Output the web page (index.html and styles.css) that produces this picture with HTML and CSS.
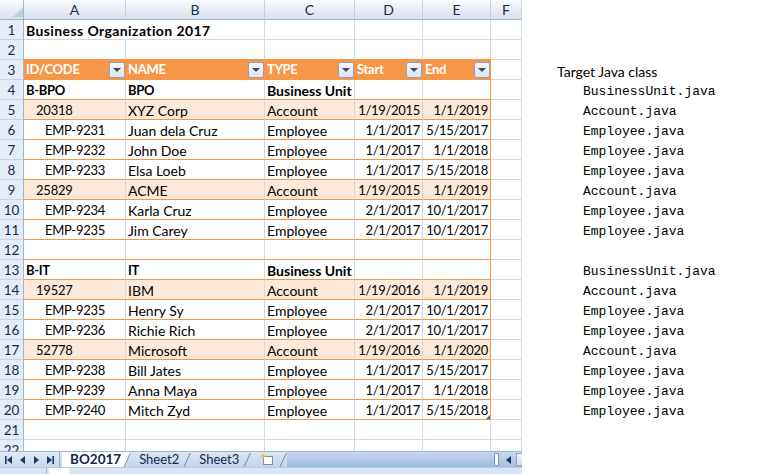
FILE: index.html
```html
<!DOCTYPE html>
<html>
<head>
<meta charset="utf-8">
<link rel="stylesheet" href="styles.css">
</head>
<body>
<div class="page">
  <div class="sheet">
    <div class="grid">
      <div class="r hdr"><div class="c corner"><svg class="tri" width="10" height="10" viewBox="0 0 10 10"><path d="M10 0 L10 10 L0 10 Z" fill="#c1cede"/></svg></div><div class="c ch">A</div><div class="c ch">B</div><div class="c ch">C</div><div class="c ch">D</div><div class="c ch">E</div><div class="c ch">F</div></div>
      <div class="r"><div class="c rh">1</div><div class="c b nob title">Business Organization 2017</div><div class="c"></div><div class="c"></div><div class="c"></div><div class="c"></div><div class="c"></div></div>
      <div class="r"><div class="c rh">2</div><div class="c o"></div><div class="c o"></div><div class="c o"></div><div class="c o"></div><div class="c o"></div><div class="c"></div></div>
      <div class="r"><div class="c rh">3</div><div class="c th o">ID/CODE<span class="fb"></span></div><div class="c th o">NAME<span class="fb"></span></div><div class="c th o">TYPE<span class="fb"></span></div><div class="c th o">Start<span class="fb"></span></div><div class="c th o e">End<span class="fb"></span></div><div class="c"></div></div>
      <div class="r"><div class="c rh">4</div><div class="c o b caps">B-BPO</div><div class="c o b caps">BPO</div><div class="c o b">Business Unit</div><div class="c o"></div><div class="c o e"></div><div class="c"></div></div>
      <div class="r"><div class="c rh">5</div><div class="c o pk i1">20318</div><div class="c o pk">XYZ Corp</div><div class="c o pk">Account</div><div class="c o pk n">1/19/2015</div><div class="c o pk n e">1/1/2019</div><div class="c"></div></div>
      <div class="r"><div class="c rh">6</div><div class="c o i2">EMP-9231</div><div class="c o">Juan dela Cruz</div><div class="c o">Employee</div><div class="c o n">1/1/2017</div><div class="c o n e">5/15/2017</div><div class="c"></div></div>
      <div class="r"><div class="c rh">7</div><div class="c o i2">EMP-9232</div><div class="c o">John Doe</div><div class="c o">Employee</div><div class="c o n">1/1/2017</div><div class="c o n e">1/1/2018</div><div class="c"></div></div>
      <div class="r"><div class="c rh">8</div><div class="c o i2">EMP-9233</div><div class="c o">Elsa Loeb</div><div class="c o">Employee</div><div class="c o n">1/1/2017</div><div class="c o n e">5/15/2018</div><div class="c"></div></div>
      <div class="r"><div class="c rh">9</div><div class="c o pk i1">25829</div><div class="c o pk">ACME</div><div class="c o pk">Account</div><div class="c o pk n">1/19/2015</div><div class="c o pk n e">1/1/2019</div><div class="c"></div></div>
      <div class="r"><div class="c rh">10</div><div class="c o i2">EMP-9234</div><div class="c o">Karla Cruz</div><div class="c o">Employee</div><div class="c o n">2/1/2017</div><div class="c o n e">10/1/2017</div><div class="c"></div></div>
      <div class="r"><div class="c rh">11</div><div class="c o i2">EMP-9235</div><div class="c o">Jim Carey</div><div class="c o">Employee</div><div class="c o n">2/1/2017</div><div class="c o n e">10/1/2017</div><div class="c"></div></div>
      <div class="r"><div class="c rh">12</div><div class="c o"></div><div class="c o"></div><div class="c o"></div><div class="c o"></div><div class="c o e"></div><div class="c"></div></div>
      <div class="r"><div class="c rh">13</div><div class="c o b caps">B-IT</div><div class="c o b caps">IT</div><div class="c o b">Business Unit</div><div class="c o"></div><div class="c o e"></div><div class="c"></div></div>
      <div class="r"><div class="c rh">14</div><div class="c o pk i1">19527</div><div class="c o pk">IBM</div><div class="c o pk">Account</div><div class="c o pk n">1/19/2016</div><div class="c o pk n e">1/1/2019</div><div class="c"></div></div>
      <div class="r"><div class="c rh">15</div><div class="c o i2">EMP-9235</div><div class="c o">Henry Sy</div><div class="c o">Employee</div><div class="c o n">2/1/2017</div><div class="c o n e">10/1/2017</div><div class="c"></div></div>
      <div class="r"><div class="c rh">16</div><div class="c o i2">EMP-9236</div><div class="c o">Richie Rich</div><div class="c o">Employee</div><div class="c o n">2/1/2017</div><div class="c o n e">10/1/2017</div><div class="c"></div></div>
      <div class="r"><div class="c rh">17</div><div class="c o pk i1">52778</div><div class="c o pk">Microsoft</div><div class="c o pk">Account</div><div class="c o pk n">1/19/2016</div><div class="c o pk n e">1/1/2020</div><div class="c"></div></div>
      <div class="r"><div class="c rh">18</div><div class="c o i2">EMP-9238</div><div class="c o">Bill Jates</div><div class="c o">Employee</div><div class="c o n">1/1/2017</div><div class="c o n e">5/15/2017</div><div class="c"></div></div>
      <div class="r"><div class="c rh">19</div><div class="c o i2">EMP-9239</div><div class="c o">Anna Maya</div><div class="c o">Employee</div><div class="c o n">1/1/2017</div><div class="c o n e">1/1/2018</div><div class="c"></div></div>
      <div class="r"><div class="c rh">20</div><div class="c o i2">EMP-9240</div><div class="c o">Mitch Zyd</div><div class="c o">Employee</div><div class="c o n">1/1/2017</div><div class="c o n e">5/15/2018<span class="grip"></span></div><div class="c"></div></div>
      <div class="r"><div class="c rh">21</div><div class="c"></div><div class="c"></div><div class="c"></div><div class="c"></div><div class="c"></div><div class="c"></div></div>
      <div class="r"><div class="c rh">22</div><div class="c"></div><div class="c"></div><div class="c"></div><div class="c"></div><div class="c"></div><div class="c"></div></div>
    </div>
    <div class="tabbar">
      <div class="nav">
        <svg width="8" height="8" viewBox="0 0 8 8"><rect x="0" y="0" width="1.6" height="8" fill="#1d3a66"/><path d="M7 0 L7 8 L2 4 Z" fill="#1d3a66"/></svg>
        <svg width="6" height="8" viewBox="0 0 6 8"><path d="M5 0 L5 8 L0 4 Z" fill="#1d3a66"/></svg>
        <svg width="6" height="8" viewBox="0 0 6 8"><path d="M1 0 L1 8 L6 4 Z" fill="#1d3a66"/></svg>
        <svg width="8" height="8" viewBox="0 0 8 8"><path d="M1 0 L1 8 L6 4 Z" fill="#1d3a66"/><rect x="6.4" y="0" width="1.6" height="8" fill="#1d3a66"/></svg>
      </div>
      <div class="tabs">
        <div class="tab active">BO2017</div>
        <svg class="slant" width="8" height="16" viewBox="0 0 8 16"><path d="M0 0 L0 16 L1 16 L8 1 L8 0 Z" fill="#fff"/><path d="M0.5 16 L7.5 1" stroke="#6d8db8" stroke-width="1"/></svg>
        <div class="tab">Sheet2</div>
        <svg class="slant" width="8" height="16" viewBox="0 0 8 16"><path d="M0.5 16 L7.5 1" stroke="#6d8db8" stroke-width="1"/></svg>
        <div class="tab">Sheet3</div>
        <svg class="slant" width="8" height="16" viewBox="0 0 8 16"><path d="M0.5 16 L7.5 1" stroke="#6d8db8" stroke-width="1"/></svg>
        <div class="tab newtab"><svg width="16" height="13" viewBox="0 0 16 13"><rect x="4.5" y="3.5" width="9" height="8" fill="#fff" stroke="#7f8ea3"/><path d="M4 0 L5 2.5 L7.5 3 L5 4 L4 6.5 L3 4 L0.5 3 L3 2.5 Z" fill="#f2b13c"/></svg></div>
        <svg class="slant" width="8" height="16" viewBox="0 0 8 16"><path d="M0.5 16 L7.5 1" stroke="#6d8db8" stroke-width="1"/></svg>
      </div>
      <div class="hscroll">
        <div class="split"></div>
        <div class="sbtn"><svg width="5" height="8" viewBox="0 0 5 8"><path d="M5 0 L5 8 L0 4 Z" fill="#1d3a66"/></svg></div>
        <div class="sthumb"></div>
      </div>
    </div>
    <div class="status"><span class="sdiv"></span><span class="sicon"></span></div>
  </div>
  <div class="side">
    <div class="spacer"></div>
    <div class="ln label">Target Java class</div>
    <div class="ln java">BusinessUnit.java</div>
    <div class="ln java">Account.java</div>
    <div class="ln java">Employee.java</div>
    <div class="ln java">Employee.java</div>
    <div class="ln java">Employee.java</div>
    <div class="ln java">Account.java</div>
    <div class="ln java">Employee.java</div>
    <div class="ln java">Employee.java</div>
    <div class="ln java"></div>
    <div class="ln java">BusinessUnit.java</div>
    <div class="ln java">Account.java</div>
    <div class="ln java">Employee.java</div>
    <div class="ln java">Employee.java</div>
    <div class="ln java">Account.java</div>
    <div class="ln java">Employee.java</div>
    <div class="ln java">Employee.java</div>
    <div class="ln java">Employee.java</div>
  </div>
</div>
</body>
</html>
```
FILE: styles.css
```css
html, body {
  margin: 0;
  padding: 0;
  background: #fff;
}
body {
  width: 764px;
  height: 474px;
  overflow: hidden;
  font-family: Lato, "Open Sans", sans-serif;
  font-size: 14px;
  color: #000;
}
.page {
  display: flex;
  height: 474px;
}
.sheet {
  width: 522px;
  display: flex;
  flex-direction: column;
  flex: none;
}
.grid {
  height: 452px;
  overflow: hidden;
}
.r {
  display: grid;
  grid-template-columns: 24px 102px 139px 90px 68px 68px 31px;
  height: 20px;
}
.c {
  box-sizing: border-box;
  height: 20px;
  border-right: 1px solid #d0d7e5;
  border-bottom: 1px solid #d0d7e5;
  padding: 2px 2px 0 2px;
  line-height: 17px;
  white-space: nowrap;
  overflow: visible;
  position: relative;
}
.nob {
  border-right-color: transparent;
}
.hdr .c {
  background: linear-gradient(#f9fbfd, #e5ebf3 60%, #d9e1ec);
  border-right: 1px solid #c5d2e3;
  border-bottom: 1px solid #9eb6ce;
  text-align: center;
  color: #1b2c45;
  padding: 1px 0 0 0;
}
.hdr .corner {
  display: flex;
  align-items: flex-end;
  justify-content: flex-end;
  padding: 0 2px 2px 0;
  border-right-color: #9eb6ce;
}
.tri { display: block; }
.rh {
  background: #e4ecf7;
  border-right: 1px solid #9eb6ce;
  border-bottom: 1px solid #c5d3e5;
  text-align: center;
  color: #1b2c45;
  font-size: 13.5px;
}
.hdr .c, .rh { padding-left: 0; padding-right: 0; }
.b { font-weight: bold; }
.title { letter-spacing: 0.4px; }
.caps { font-size: 13px; letter-spacing: -0.3px; }
.o { border-bottom-color: #f79646; }
.e { border-right-color: #f79646; }
.pk { background: #fde9d9; }
.n {
  text-align: right;
  padding-right: 2px;
  padding-left: 0;
  font-size: 13px;
  letter-spacing: -0.3px;
}
.i1 { padding-left: 12px; font-size: 13px; letter-spacing: -0.2px; }
.i2 { padding-left: 21px; font-size: 13px; letter-spacing: -0.25px; }
.th {
  background: #f79646;
  color: #fff;
  font-weight: bold;
  font-size: 13px;
  letter-spacing: -0.3px;
  border-right-color: #f79646;
  display: flex;
  align-items: center;
  padding: 0 0 0 2px;
}
.fb {
  margin-left: auto;
  margin-right: 0;
  width: 16px;
  height: 16px;
  box-sizing: border-box;
  border: 1px solid #8ea3bf;
  border-radius: 2px;
  background: linear-gradient(#f4f6f9, #dfe5ee);
  display: flex;
  align-items: center;
  justify-content: center;
}
.fb::after {
  content: "";
  border-left: 4px solid transparent;
  border-right: 4px solid transparent;
  border-top: 4px solid #3a4b64;
  margin-top: 1px;
}
.grip {
  position: absolute;
  right: 0;
  bottom: 0;
  width: 0;
  height: 0;
  border-left: 4px solid transparent;
  border-bottom: 4px solid #3f64a8;
}
.tabbar {
  height: 16px;
  display: flex;
  background: linear-gradient(#c6d7ee, #9fbbe0);
  border-top: 1px solid #9fb6d3;
  box-sizing: border-box;
  flex: none;
}
.nav {
  width: 60px;
  display: flex;
  align-items: center;
  justify-content: space-around;
  padding: 0 2px;
  box-sizing: border-box;
  background: linear-gradient(#e2eaf6, #c9d8ee);
  border-right: 1px solid #8fa8c8;
}
.tabs {
  display: flex;
  align-items: stretch;
  padding-left: 2px;
  background: linear-gradient(#dbe6f4, #c3d5ec);
}
.tab {
  padding: 0 4px 0 8px;
  line-height: 15px;
  color: #15294a;
  font-size: 13px;
}
.tab.active {
  background: #fff;
  font-weight: bold;
  font-size: 13.5px;
  padding: 0 2px 0 8px;
}
.newtab {
  display: flex;
  align-items: center;
  padding: 0 4px 0 8px;
}
.slant { display: block; flex: none; }
.hscroll {
  margin-left: auto;
  display: flex;
  align-items: stretch;
}
.split {
  width: 5px;
  margin: 1px 2px 1px 0;
  background: #fff;
  border: 1px solid #7c93b4;
  border-radius: 1px;
  box-sizing: border-box;
}
.sbtn {
  width: 15px;
  display: flex;
  align-items: center;
  justify-content: center;
  background: linear-gradient(#c9d8ee, #a8bfdf);
}
.sthumb {
  width: 6px;
  margin: 1px 0;
  background: linear-gradient(#f4f7fb, #d5dfec);
  border: 1px solid #8ea3bf;
  border-right: none;
  box-sizing: border-box;
}
.status {
  height: 6px;
  background: #dbe6f4;
  border-top: 1px solid #b9cbe3;
  display: flex;
}
.sdiv {
  width: 46px;
  border-right: 1px solid #9db2cf;
}
.sicon {
  width: 20px;
  margin-left: 2px;
  background: #fff;
}
.side {
  display: flex;
  flex-direction: column;
  padding-left: 35px;
}
.spacer { height: 60px; }
.ln {
  height: 20px;
  line-height: 17px;
  padding-top: 3px;
  box-sizing: border-box;
  white-space: nowrap;
}
.java {
  font-family: "Liberation Mono", "Courier New", monospace;
  font-size: 13px;
  padding-left: 26px;
}
```
